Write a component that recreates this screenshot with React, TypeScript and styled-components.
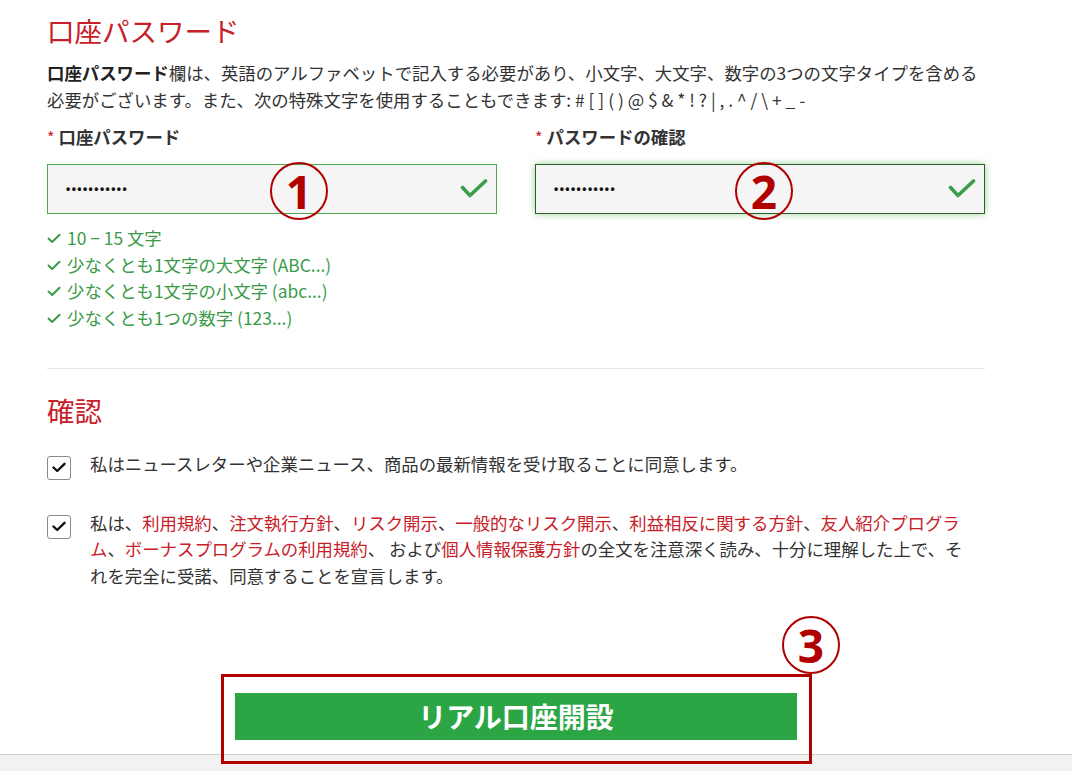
import React from "react";
import styled, { createGlobalStyle } from "styled-components";

const GlobalStyle = createGlobalStyle`
  html, body { margin: 0; padding: 0; background: #fff; }
  body {
    font-family: "Noto Sans CJK JP", "Noto Sans", sans-serif;
    color: #333;
  }
  * { box-sizing: border-box; }
`;

const RED = "#c8202a";
const ANNOT = "#b00000";
const GREEN = "#3a9a48";

const Page = styled.div`
  width: 1072px;
  height: 771px;
  overflow: hidden;
  display: flex;
  flex-direction: column;
`;

const Content = styled.main`
  width: 985px;
  padding: 12px 0 0 47px;
`;

const SectionTitle = styled.h2<{ $mt?: number }>`
  margin: ${(p) => p.$mt ?? 0}px 0 0;
  font-size: 27.5px;
  line-height: 36px;
  font-weight: 400;
  color: ${RED};
`;

const Intro = styled.p`
  margin: 10.5px 0 0;
  font-size: 17.4px;
  line-height: 27px;
  color: #333;
  strong { font-weight: 700; color: #222; }
`;

const FieldRow = styled.div`
  display: grid;
  grid-template-columns: 450px 450px;
  column-gap: 38px;
  margin-top: 11px;
`;

const Field = styled.div`
  display: flex;
  flex-direction: column;
  position: relative;
`;

const Label = styled.label`
  display: flex;
  align-items: baseline;
  gap: 4px;
  font-size: 17.4px;
  line-height: 26px;
  font-weight: 700;
  color: #333;
`;

const Req = styled.span`
  color: ${RED};
  font-size: 16px;
  font-weight: 400;
`;

const InputBox = styled.div<{ $focused?: boolean }>`
  position: relative;
  margin-top: 14px;
  height: 50px;
  background: #f5f5f5;
  border: 1px solid ${(p) => (p.$focused ? "#2c5e2c" : "#4ea84e")};
  box-shadow: ${(p) => (p.$focused ? "0 0 7px rgba(70,170,70,0.55)" : "none")};
  display: flex;
  align-items: center;
  justify-content: space-between;
  padding: 0 8px 0 18px;
`;

const Dots = styled.span`
  font-family: "Liberation Sans", Arial, sans-serif;
  font-size: 12px;
  font-weight: 700;
  letter-spacing: 1.45px;
  color: #111;
`;

const Marker = styled.span<{ $size?: number }>`
  position: absolute;
  width: ${(p) => p.$size ?? 58}px;
  height: ${(p) => p.$size ?? 58}px;
  border: 2.5px solid ${ANNOT};
  border-radius: 50%;
  display: flex;
  align-items: center;
  justify-content: center;
  font-family: "Noto Sans", "Open Sans", sans-serif;
  font-weight: 700;
  font-size: 46px;
  line-height: 1;
  color: ${ANNOT};
  z-index: 2;
`;

const Rules = styled.ul`
  list-style: none;
  margin: 11.75px 0 0;
  padding: 0;
`;

const Rule = styled.li`
  display: flex;
  align-items: center;
  gap: 6px;
  font-size: 17.4px;
  line-height: 26.5px;
  color: ${GREEN};
`;

const Divider = styled.hr`
  margin: 37px 0 0;
  width: 938px;
  border: none;
  border-top: 1px solid #e4e4e4;
`;

const Consents = styled.div`
  margin-top: 23px;
  display: flex;
  flex-direction: column;
  gap: 30px;
`;

const ConsentRow = styled.label`
  display: flex;
  align-items: flex-start;
  gap: 19px;
`;

const Box = styled.span`
  flex: none;
  margin-top: 5px;
  width: 24px;
  height: 24px;
  border: 1px solid #8a8a8a;
  border-radius: 3px;
  background: #fff;
  display: flex;
  align-items: center;
  justify-content: center;
`;

const ConsentText = styled.span`
  max-width: 885px;
  font-size: 17.4px;
  line-height: 26.5px;
  color: #333;
`;

const Link = styled.a`
  color: ${RED};
  text-decoration: none;
`;

const ButtonArea = styled.div`
  margin-top: 103.5px;
  width: 938px;
  display: flex;
  justify-content: center;
`;

const ButtonWrap = styled.div`
  position: relative;
`;

const SubmitButton = styled.button`
  display: block;
  width: 562px;
  height: 47px;
  border: none;
  background: #2ca545;
  color: #fff;
  font-family: "Noto Sans CJK JP", sans-serif;
  font-size: 28px;
  font-weight: 700;
  line-height: 47px;
  padding: 0;
  cursor: pointer;
`;

const Frame = styled.span`
  position: absolute;
  left: -14px;
  top: -19px;
  right: -15px;
  bottom: -24px;
  border: 3px solid ${ANNOT};
  z-index: 3;
  pointer-events: none;
`;

const Footer = styled.footer`
  flex: 1;
  margin-top: 14px;
  background: #f2f2f2;
  border-top: 1px solid #d2d2d2;
`;

const InputCheck = () => (
  <svg width="28" height="20" viewBox="0 0 28 20">
    <polyline
      points="2.5,8.5 10,16.5 25.5,2"
      fill="none"
      stroke="#3a9d4a"
      strokeWidth="3.6"
      strokeLinecap="round"
      strokeLinejoin="round"
    />
  </svg>
);

const SmallCheck = () => (
  <svg width="14" height="11" viewBox="0 0 14 11">
    <polyline
      points="1.5,5.5 5.2,9 12.5,1.8"
      fill="none"
      stroke={GREEN}
      strokeWidth="2"
      strokeLinecap="round"
      strokeLinejoin="round"
    />
  </svg>
);

const BoxCheck = () => (
  <svg width="14" height="11" viewBox="0 0 14 11">
    <polyline
      points="1.5,5.5 5.2,9 12.5,1.8"
      fill="none"
      stroke="#111"
      strokeWidth="2.4"
      strokeLinecap="round"
      strokeLinejoin="round"
    />
  </svg>
);

const rules = [
  "10 − 15 文字",
  "少なくとも1文字の大文字 (ABC...)",
  "少なくとも1文字の小文字 (abc...)",
  "少なくとも1つの数字 (123...)",
];

export default function App() {
  return (
    <>
      <GlobalStyle />
      <Page>
        <Content>
          <SectionTitle>口座パスワード</SectionTitle>
          <Intro>
            <strong>口座パスワード</strong>欄は、英語のアルファベットで記入する必要があり、小文字、大文字、数字の3つの文字タイプを含める必要がございます。また、次の特殊文字を使用することもできます:{" "}
            {"# [ ] ( ) @ $ & * ! ? | , . ^ / \\ + _ -"}
          </Intro>

          <FieldRow>
            <Field>
              <Label>
                <Req>*</Req>口座パスワード
              </Label>
              <InputBox>
                <Dots>•••••••••••</Dots>
                <InputCheck />
                <Marker style={{ left: 222, top: -3 }}>1</Marker>
              </InputBox>
              <Rules>
                {rules.map((r) => (
                  <Rule key={r}>
                    <SmallCheck />
                    {r}
                  </Rule>
                ))}
              </Rules>
            </Field>
            <Field>
              <Label>
                <Req>*</Req>パスワードの確認
              </Label>
              <InputBox $focused>
                <Dots>•••••••••••</Dots>
                <InputCheck />
                <Marker style={{ left: 199, top: -3 }}>2</Marker>
              </InputBox>
            </Field>
          </FieldRow>

          <Divider />

          <SectionTitle $mt={22.5}>確認</SectionTitle>
          <Consents>
            <ConsentRow>
              <Box>
                <BoxCheck />
              </Box>
              <ConsentText>
                私はニュースレターや企業ニュース、商品の最新情報を受け取ることに同意します。
              </ConsentText>
            </ConsentRow>
            <ConsentRow>
              <Box>
                <BoxCheck />
              </Box>
              <ConsentText>
                私は、<Link>利用規約</Link>、<Link>注文執行方針</Link>、<Link>リスク開示</Link>、<Link>一般的なリスク開示</Link>、<Link>利益相反に関する方針</Link>、<Link>友人紹介プログラム</Link>、<Link>ボーナスプログラムの利用規約</Link>、 および<Link>個人情報保護方針</Link>の全文を注意深く読み、十分に理解した上で、それを完全に受諾、同意することを宣言します。
              </ConsentText>
            </ConsentRow>
          </Consents>

          <ButtonArea>
            <ButtonWrap>
              <SubmitButton type="button">リアル口座開設</SubmitButton>
              <Frame />
              <Marker style={{ left: 547, top: -77 }}>3</Marker>
            </ButtonWrap>
          </ButtonArea>
        </Content>
        <Footer />
      </Page>
    </>
  );
}
